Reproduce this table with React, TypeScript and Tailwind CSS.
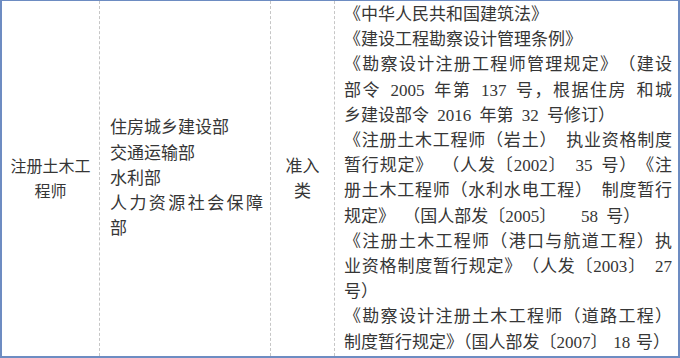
const lawLines: { text: string; full?: boolean; tight?: boolean }[] = [
  { text: "《中华人民共和国建筑法》" },
  { text: "《建设工程勘察设计管理条例》" },
  { text: "《勘察设计注册工程师管理规定》（建设", full: true },
  { text: "部令 2005 年第 137 号，根据住房 和城", full: true },
  { text: "乡建设部令 2016 年第 32 号修订）" },
  { text: "《注册土木工程师（岩土） 执业资格制度", full: true },
  { text: "暂行规定》 （人发〔2002〕 35 号）《注", full: true },
  { text: "册土木工程师（水利水电工程） 制度暂行", full: true },
  { text: "规定》 （国人部发〔2005〕   58 号）" },
  { text: "《注册土木工程师（港口与航道工程）执", full: true },
  { text: "业资格制度暂行规定》（人发〔2003〕 27", full: true },
  { text: "号）" },
  { text: "《勘察设计注册土木工程师（道路工程）", full: true },
  { text: "制度暂行规定》（国人部发〔2007〕 18 号）", tight: true },
];

const ministries = [
  { text: "住房城乡建设部", full: false },
  { text: "交通运输部", full: false },
  { text: "水利部", full: false },
  { text: "人力资源社会保障", full: true },
  { text: "部", full: false },
];

function lineClass(l: { full?: boolean; tight?: boolean }) {
  // last line is a bit too long with full-width punctuation, let 》（ collapse
  if (l.tight) {
    return "whitespace-pre [text-spacing-trim:normal] [word-spacing:1.5px]";
  }
  if (l.full) {
    return "whitespace-pre text-justify [text-align-last:justify]";
  }
  return "whitespace-pre";
}

export default function App() {
  return (
    <div className="w-[680px] h-[358px] flex bg-white border-l-2 border-t border-r-2 border-b-2 border-[#6d8cc2] text-[#363636] font-['Liberation_Serif','Noto_Sans_CJK_SC',serif]">
      {/* 资格名称 */}
      <div className="w-[97px] shrink-0 flex flex-col items-center justify-center text-[16px] leading-[25px] text-center">
        <div>注册土木工</div>
        <div>程师</div>
      </div>

      {/* 实施部门 */}
      <div className="w-[171px] shrink-0 flex flex-col justify-center border-l border-dashed border-[#c6c6c6] pl-[10px] pr-[7px] text-[17px] leading-[25.2px]">
        {ministries.map((m) => (
          <div
            key={m.text}
            className={m.full ? "text-justify [text-align-last:justify]" : ""}
          >
            {m.text}
          </div>
        ))}
      </div>

      {/* 类别 */}
      <div className="w-[64px] shrink-0 flex flex-col items-center justify-center border-l border-dashed border-[#c6c6c6] text-[17px] leading-[25px] text-center">
        <div>准入</div>
        <div>类</div>
      </div>

      {/* 设定依据 */}
      <div className="flex-1 min-w-0 border-l border-dashed border-[#c6c6c6] pl-[9px] pr-[6px] pt-[1px] text-[17px] leading-[25.2px] [word-spacing:4px] [text-spacing-trim:space-all]">
        {lawLines.map((l, i) => (
          <div key={i} className={lineClass(l)}>
            {l.text}
          </div>
        ))}
      </div>
    </div>
  );
}
